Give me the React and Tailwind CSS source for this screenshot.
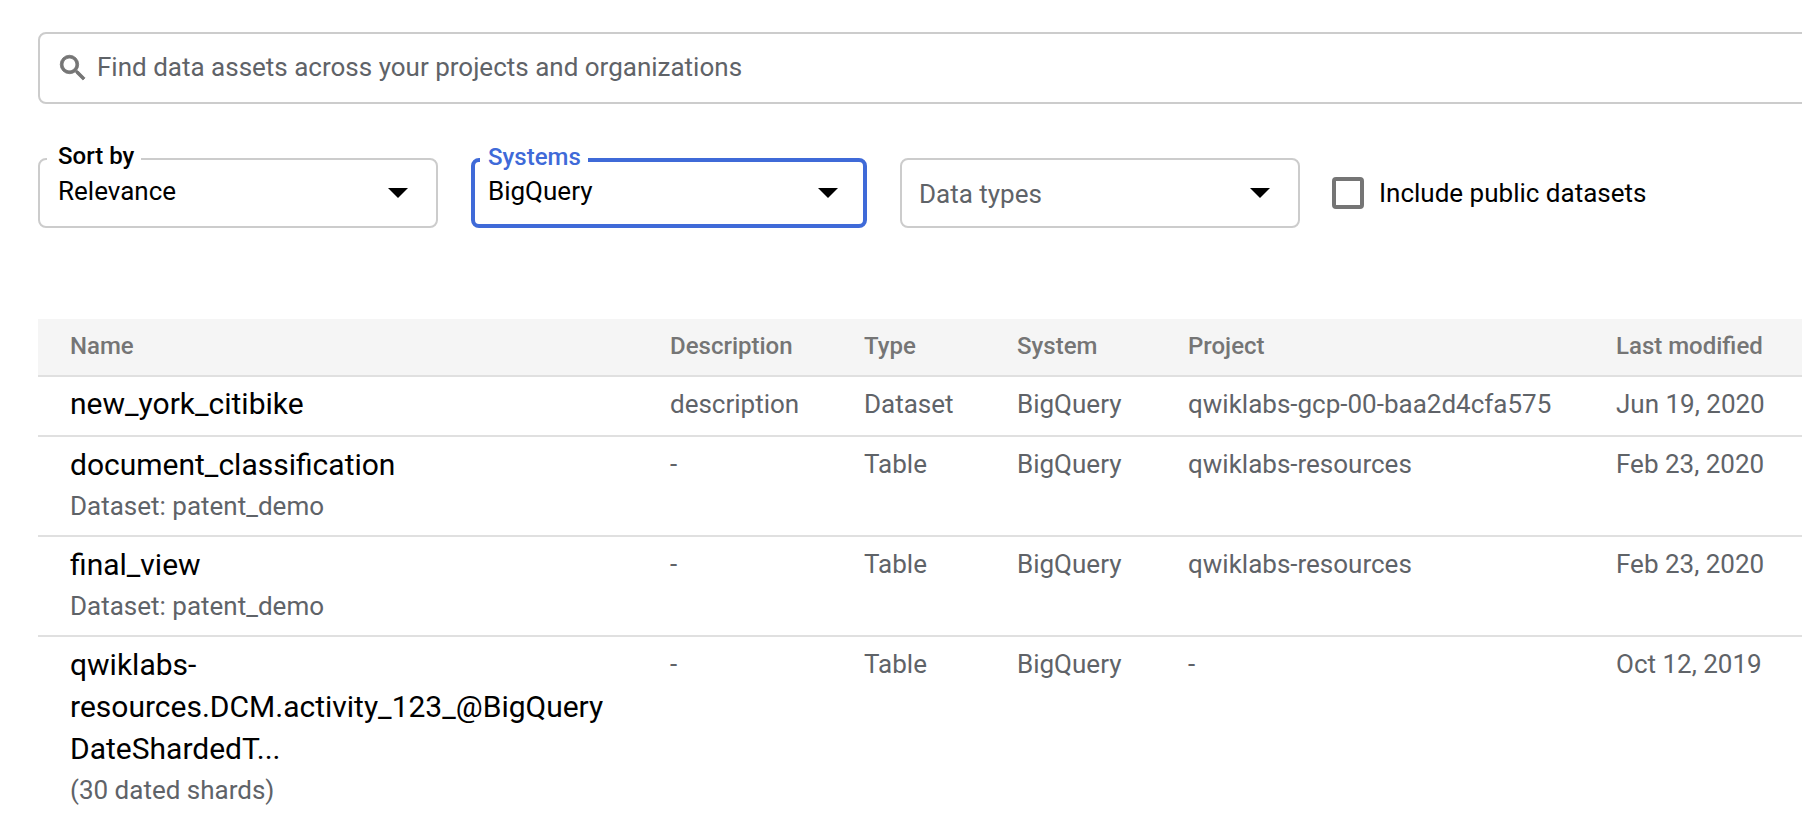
const rows = [
  { name: ["new_york_citibike"], sub: null, desc: "description", type: "Dataset", project: "qwiklabs-gcp-00-baa2d4cfa575", date: "Jun 19, 2020", h: "h-[60px] items-center pb-[4px]" },
  { name: ["document_classification"], sub: "Dataset: patent_demo", desc: "-", type: "Table", project: "qwiklabs-resources", date: "Feb 23, 2020", h: "h-[100px] pt-[7px]" },
  { name: ["final_view"], sub: "Dataset: patent_demo", desc: "-", type: "Table", project: "qwiklabs-resources", date: "Feb 23, 2020", h: "h-[100px] pt-[7px]" },
  { name: ["qwiklabs-", "resources.DCM.activity_123_@BigQuery", "DateShardedT..."], sub: "(30 dated shards)", desc: "-", type: "Table", project: "-", date: "Oct 12, 2019", h: "h-[183px] pt-[7px]" },
];

const cols = "grid grid-cols-[600px_194px_153px_171px_428px_1fr]";

function Caret() {
  return (
    <svg width="20" height="10" viewBox="0 0 20 10" className="shrink-0">
      <path d="M0 0h20L10 10z" fill="#000" />
    </svg>
  );
}

function Select({ label, value, active, placeholder, width }) {
  return (
    <div className={`relative flex h-[70px] items-center justify-between rounded-[8px] bg-white ${width} ${active ? "border-[4px] border-[#3f6ad8] pl-[13px] pr-[25px]" : "border-2 border-[#cccccc] pl-[18px] pr-[28px]"}`}>
      {label && (
        <span className={`absolute bg-white text-[24px] font-medium leading-[26px] ${active ? "-top-[18px] left-[5px] pl-[8px] pr-[7px] text-[#3f6ad8]" : "-top-[17px] left-[7px] pl-[11px] pr-[7px] text-black"}`}>
          {label}
        </span>
      )}
      <span className={`text-[26px] leading-[30px] ${placeholder ? "-ml-[1px] mt-[1px] text-[#5f6368]" : "-mt-[5px] text-black"}`}>{value}</span>
      <Caret />
    </div>
  );
}

export default function App() {
  return (
    <div className="h-[818px] w-[1802px] overflow-hidden bg-white font-['Roboto',sans-serif] text-[26px]">
      <div className="pl-[38px] pt-[32px]">
        <div className="flex h-[72px] w-[1800px] items-center rounded-[8px] border-2 border-[#cccccc] pl-[16px]">
          <svg width="34" height="34" viewBox="0 0 24 24" className="shrink-0" fill="#757575">
            <path d="M15.5 14h-.79l-.28-.27A6.47 6.47 0 0 0 16 9.5 6.5 6.5 0 1 0 9.5 16c1.61 0 3.09-.59 4.23-1.57l.27.28v.79l5 4.99L20.49 19l-4.99-5zm-6 0C7.01 14 5 11.99 5 9.5S7.01 5 9.5 5 14 7.01 14 9.5 11.99 14 9.5 14z" stroke="#757575" strokeWidth="0.6" />
          </svg>
          <span className="ml-[7px] -mt-[1px] text-[#5f6368]">Find data assets across your projects and organizations</span>
        </div>

        <div className="mt-[54px] flex items-center">
          <Select label="Sort by" value="Relevance" width="w-[400px]" />
          <div className="w-[33px]" />
          <Select label="Systems" value="BigQuery" active width="w-[396px]" />
          <div className="w-[33px]" />
          <Select value="Data types" placeholder width="w-[400px]" />
          <div className="ml-[32px] flex items-center">
            <div className="h-[32px] w-[32px] rounded-[4px] border-[4px] border-[#757575]" />
            <span className="ml-[15px] mt-[1px] text-black">Include public datasets</span>
          </div>
        </div>

        <div className="mt-[91px]">
          <div className={`${cols} h-[58px] items-center border-b-2 border-[#e0e0e0] bg-[#f5f5f5] pl-[32px] text-[24px] font-medium text-[#757575]`}>
            <div className="-mt-[2px]">Name</div>
            <div className="-mt-[2px]">Description</div>
            <div className="-mt-[2px]">Type</div>
            <div className="-mt-[2px]">System</div>
            <div className="-mt-[2px]">Project</div>
            <div className="-mt-[2px]">Last modified</div>
          </div>
          {rows.map((r, i) => (
            <div key={i} className={`${cols} ${r.h} border-b-2 border-[#e0e0e0] pl-[32px] text-[#5f6368] last:border-b-0`}>
              <div>
                {r.name.map((n) => (
                  <div key={n} className="text-[30px] leading-[42px] text-black whitespace-nowrap">{n}</div>
                ))}
                {r.sub && <div className="mt-[2px] leading-[36px]">{r.sub}</div>}
              </div>
              <div className="-mt-[1px] leading-[42px]">{r.desc}</div>
              <div className="-mt-[1px] leading-[42px]">{r.type}</div>
              <div className="-mt-[1px] leading-[42px]">BigQuery</div>
              <div className="-mt-[1px] leading-[42px]">{r.project}</div>
              <div className="-mt-[1px] leading-[42px]">{r.date}</div>
            </div>
          ))}
        </div>
      </div>
    </div>
  );
}
